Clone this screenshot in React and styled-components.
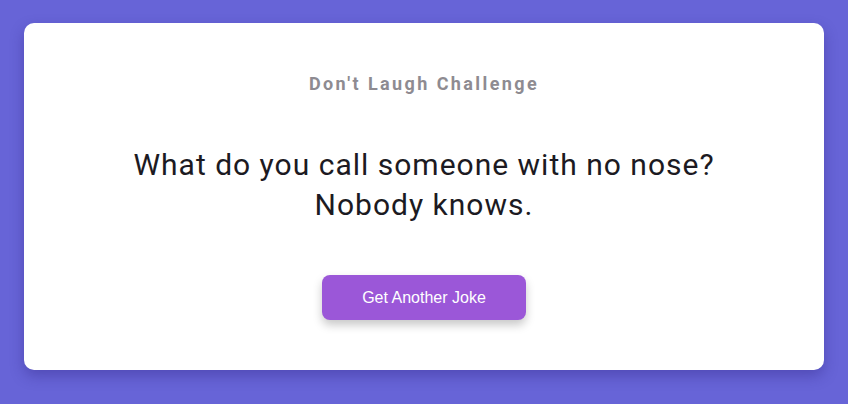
import React from 'react';
import styled, { createGlobalStyle } from 'styled-components';

const GlobalStyle = createGlobalStyle`
  html, body {
    margin: 0;
    padding: 0;
    background: #6764d7;
  }
  body {
    font-family: Roboto, "Liberation Sans", sans-serif;
  }
`;

const Page = styled.div`
  width: 848px;
  height: 404px;
  box-sizing: border-box;
  padding: 23px 24px 34px;
  background: #6764d7;
`;

const Card = styled.section`
  background: #ffffff;
  border-radius: 10px;
  box-shadow: 0 6px 14px rgba(40, 30, 120, 0.35);
  padding: 50px 40px 50px;
  display: flex;
  flex-direction: column;
  align-items: center;
  text-align: center;
`;

const Title = styled.h3`
  margin: 0;
  font-size: 18px;
  line-height: 21px;
  font-weight: 700;
  letter-spacing: 2.4px;
  color: #8e8b91;
`;

const Joke = styled.p`
  margin: 51px 0 50px;
  font-size: 30px;
  line-height: 40px;
  font-weight: 400;
  letter-spacing: 1px;
  color: #1c1a22;
`;

const Button = styled.button`
  width: 204px;
  height: 45px;
  border: none;
  border-radius: 8px;
  background: #9b57d8;
  color: #ffffff;
  font-family: "Liberation Sans", Arial, sans-serif;
  font-size: 16px;
  box-shadow: 0 5px 10px rgba(0, 0, 0, 0.22);
  cursor: pointer;
`;

const App = () => {
  return (
    <Page>
      <GlobalStyle />
      <Card>
        <Title>Don't Laugh Challenge</Title>
        <Joke>
          What do you call someone with no nose?
          <br />
          Nobody knows.
        </Joke>
        <Button>Get Another Joke</Button>
      </Card>
    </Page>
  );
};

export default App;
